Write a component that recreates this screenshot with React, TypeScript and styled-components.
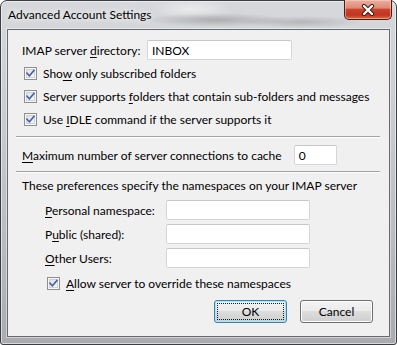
import React from "react";
import styled, { createGlobalStyle } from "styled-components";

const GlobalStyle = createGlobalStyle`
  html, body { margin: 0; padding: 0; background: #ffffff; overflow: hidden; }
  #root { width: 397px; height: 345px; }
  * { box-sizing: border-box; }
`;

const Window = styled.div`
  width: 397px;
  height: 345px;
  display: flex;
  flex-direction: column;
  border: 1px solid #3a3d41;
  border-radius: 7px 7px 3px 3px;
  padding: 0 6px 7px 6px;
  font-family: "Lato", "Liberation Sans", sans-serif;
  font-size: 12px;
  color: #000;
  box-shadow: inset 0 0 0 1px rgba(255, 255, 255, 0.55);
  background:
    radial-gradient(ellipse 70px 7px at 215px 19px, rgba(70, 70, 70, 0.28), transparent),
    radial-gradient(ellipse 60px 6px at 300px 21px, rgba(70, 70, 70, 0.22), transparent),
    radial-gradient(ellipse 40px 10px at 190px 8px, rgba(255, 255, 255, 0.5), transparent),
    linear-gradient(180deg, #d6d8db 0%, #cbcdd0 30%, #b9bbbe 70%, #a9abae 100%);
`;

const TitleBar = styled.div`
  height: 28px;
  margin: 0 -6px;
  display: flex;
  justify-content: space-between;
  align-items: flex-start;
  padding-left: 7px;
`;

const Title = styled.span`
  padding-top: 6px;
  line-height: 15px;
  text-shadow: 0 0 6px rgba(255, 255, 255, 0.95), 0 0 10px rgba(255, 255, 255, 0.8);
`;

const CloseButton = styled.div`
  width: 48px;
  height: 20px;
  margin: -1px 4px 0 0;
  display: flex;
  align-items: center;
  justify-content: center;
  border: 1px solid #4d1a12;
  border-top: none;
  border-radius: 0 0 5px 5px;
  background: linear-gradient(
    180deg,
    #eab0a2 0%,
    #df8a76 42%,
    #c9432d 50%,
    #c2341f 78%,
    #d8673f 100%
  );
  box-shadow: inset 0 0 0 1px rgba(255, 210, 200, 0.55);
`;

const Client = styled.div`
  flex: 1;
  display: flex;
  flex-direction: column;
  border: 1px solid #646a72;
  background: #f0f0f0;
  box-shadow: 0 0 0 1px rgba(255, 255, 255, 0.45);
`;

const Row = styled.div<{ $top: number; $left: number; $gap?: number }>`
  display: flex;
  align-items: center;
  gap: ${(p) => p.$gap ?? 0}px;
  margin: ${(p) => p.$top}px 0 0 ${(p) => p.$left}px;
`;

const Label = styled.span<{ $width?: number }>`
  ${(p) => (p.$width ? `width: ${p.$width}px; flex: none;` : "")}
  line-height: 15px;
  white-space: nowrap;
`;

const Key = styled.u`
  text-underline-offset: 2px;
  text-decoration-thickness: 1px;
`;

const TextBox = styled.div<{ $width: number }>`
  width: ${(p) => p.$width}px;
  height: 20px;
  flex: none;
  background: #fff;
  border: 1px solid #d3d6da;
  border-top-color: #c3c6cb;
  border-radius: 2px;
  padding: 0 4px;
  display: flex;
  align-items: center;
  line-height: 15px;
`;

const CheckList = styled.div<{ $top: number; $left: number }>`
  display: flex;
  flex-direction: column;
  margin: ${(p) => p.$top}px 0 0 ${(p) => p.$left}px;
`;

const CheckRow = styled.label`
  height: 23px;
  display: flex;
  align-items: center;
  gap: 6px;
  white-space: nowrap;
  line-height: 15px;
`;

const Box = styled.span`
  width: 13px;
  height: 13px;
  flex: none;
  border: 1px solid #8e8f8f;
  background: linear-gradient(135deg, #d9dadc 0%, #eeeeef 55%, #fbfbfb 100%);
  box-shadow: inset 0 0 0 1px #f6f6f6, inset 0 0 0 2px #cfd1d4;
  display: flex;
  align-items: center;
  justify-content: center;
`;

const Separator = styled.div<{ $top: number }>`
  margin: ${(p) => p.$top}px 9px 0 8px;
  border-top: 1px solid #a3a3a3;
  border-bottom: 1px solid #ffffff;
`;

const Intro = styled.div`
  margin: 5px 0 0 14px;
  line-height: 16px;
  white-space: nowrap;
`;

const NsGrid = styled.div`
  display: grid;
  grid-template-columns: 121px 144px;
  grid-auto-rows: 20px;
  row-gap: 4px;
  align-items: center;
  margin: 6px 0 0 37px;
`;

const ButtonRow = styled.div`
  display: flex;
  justify-content: flex-end;
  gap: 13px;
  margin-top: 5px;
  padding-right: 16px;
`;

const Button = styled.div<{ $default?: boolean }>`
  position: relative;
  width: 73px;
  height: 23px;
  display: flex;
  align-items: center;
  justify-content: center;
  border: 1px solid ${(p) => (p.$default ? "#3c7fb1" : "#707070")};
  border-radius: 3px;
  line-height: 15px;
  background: linear-gradient(180deg, #f2f2f2 0%, #ebebeb 49%, #dddddd 50%, #cfcfcf 100%);
  box-shadow: inset 0 0 0 1px ${(p) => (p.$default ? "#a8e4f7" : "#fcfcfc")};
  &::after {
    content: "";
    display: ${(p) => (p.$default ? "block" : "none")};
    position: absolute;
    inset: 2px;
    border: 1px dotted #1a1a1a;
  }
`;

const Check = () => (
  <svg width="9" height="9" viewBox="0 0 9 9">
    <path
      d="M1 4.2 L3.4 6.8 L8 1.4"
      fill="none"
      stroke="#4261a6"
      strokeWidth="1.6"
      strokeLinecap="square"
    />
  </svg>
);

const CheckBox: React.FC<{ children: React.ReactNode }> = ({ children }) => (
  <CheckRow>
    <Box>
      <Check />
    </Box>
    <span>{children}</span>
  </CheckRow>
);

const CloseGlyph = () => (
  <svg width="14" height="12" viewBox="0 0 14 12">
    <path d="M3 2 L11 10 M11 2 L3 10" stroke="#3b1610" strokeWidth="4.2" strokeLinecap="round" />
    <path d="M3 2 L11 10 M11 2 L3 10" stroke="#ffffff" strokeWidth="2.4" strokeLinecap="round" />
  </svg>
);

export default function App() {
  return (
    <>
      <GlobalStyle />
      <Window>
        <TitleBar>
          <Title>Advanced Account Settings</Title>
          <CloseButton>
            <CloseGlyph />
          </CloseButton>
        </TitleBar>
        <Client>
          <Row $top={10} $left={14}>
            <Label $width={125}>
              IMAP server <Key>d</Key>irectory:
            </Label>
            <TextBox $width={145}>INBOX</TextBox>
          </Row>
          <CheckList $top={2} $left={16}>
            <CheckBox>
              Sho<Key>w</Key> only subscribed folders
            </CheckBox>
            <CheckBox>
              Server supports <Key>f</Key>olders that contain sub-folders and messages
            </CheckBox>
            <CheckBox>
              Use <Key>I</Key>DLE command if the server supports it
            </CheckBox>
          </CheckList>
          <Separator $top={5} />
          <Row $top={7} $left={14} $gap={12}>
            <Label>
              <Key>M</Key>aximum number of server connections to cache
            </Label>
            <TextBox $width={43}>0</TextBox>
          </Row>
          <Separator $top={6} />
          <Intro>These preferences specify the namespaces on your IMAP server</Intro>
          <NsGrid>
            <Label>
              <Key>P</Key>ersonal namespace:
            </Label>
            <TextBox $width={144} />
            <Label>
              P<Key>u</Key>blic (shared):
            </Label>
            <TextBox $width={144} />
            <Label>
              <Key>O</Key>ther Users:
            </Label>
            <TextBox $width={144} />
          </NsGrid>
          <CheckList $top={4} $left={39}>
            <CheckBox>
              <Key>A</Key>llow server to override these namespaces
            </CheckBox>
          </CheckList>
          <ButtonRow>
            <Button $default>OK</Button>
            <Button>Cancel</Button>
          </ButtonRow>
        </Client>
      </Window>
    </>
  );
}
